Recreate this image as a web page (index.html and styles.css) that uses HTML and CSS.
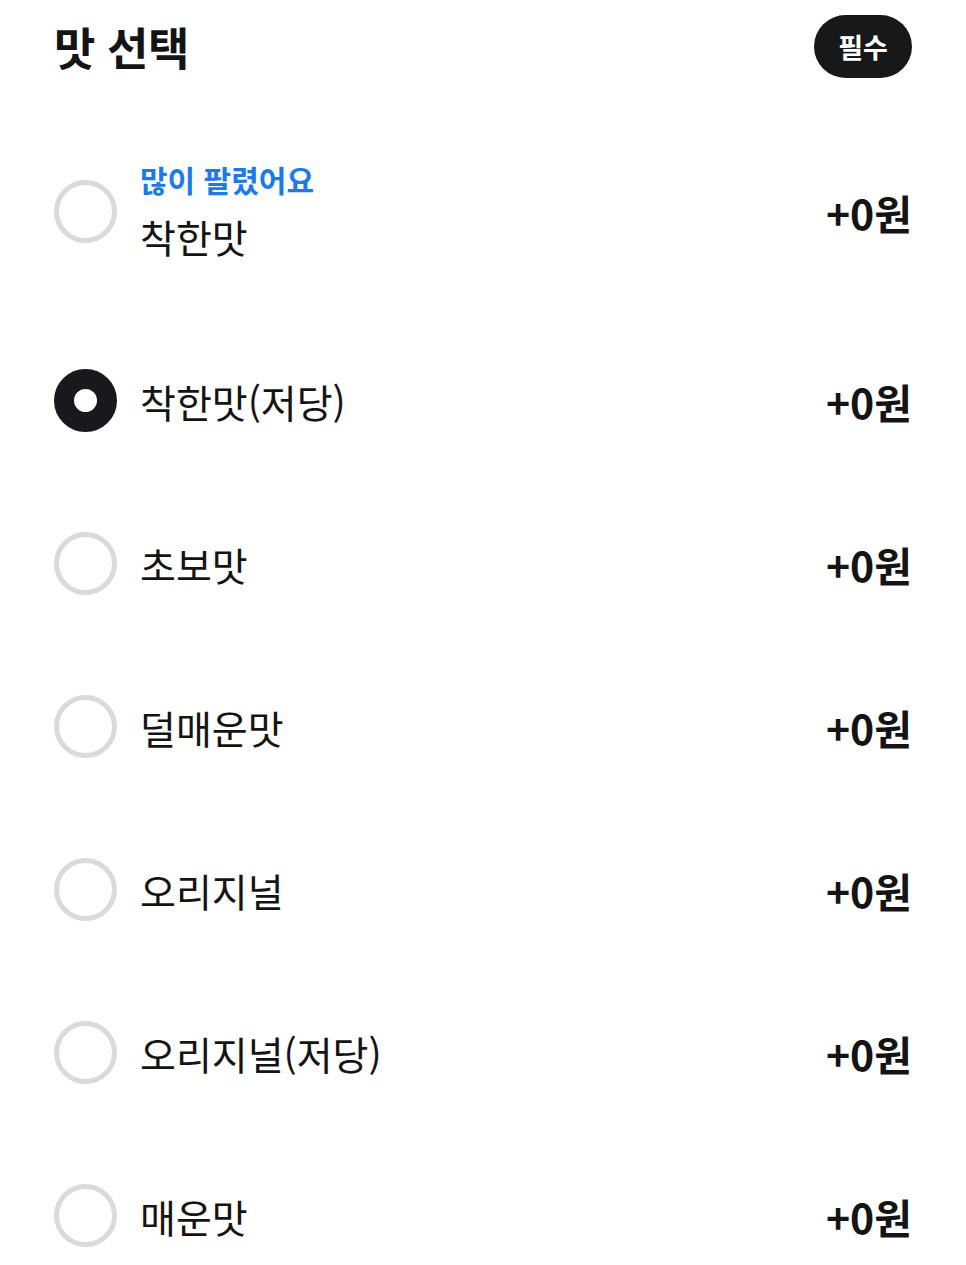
FILE: index.html
```html
<!DOCTYPE html>
<html lang="ko">
<head>
<meta charset="utf-8">
<link rel="stylesheet" href="styles.css">
</head>
<body>
<div class="page">
  <div class="header">
    <h1 class="title">맛 선택</h1>
    <span class="badge">필수</span>
  </div>
  <ul class="options">
    <li class="option option-first">
      <span class="radio"></span>
      <div class="label label-tagged">
        <span class="tag">많이 팔렸어요</span>
        <span class="name">착한맛</span>
      </div>
      <span class="price">+0원</span>
    </li>
    <li class="option">
      <span class="radio radio-on"></span>
      <div class="label"><span class="name">착한맛(저당)</span></div>
      <span class="price">+0원</span>
    </li>
    <li class="option">
      <span class="radio"></span>
      <div class="label"><span class="name">초보맛</span></div>
      <span class="price">+0원</span>
    </li>
    <li class="option">
      <span class="radio"></span>
      <div class="label"><span class="name">덜매운맛</span></div>
      <span class="price">+0원</span>
    </li>
    <li class="option">
      <span class="radio"></span>
      <div class="label"><span class="name">오리지널</span></div>
      <span class="price">+0원</span>
    </li>
    <li class="option">
      <span class="radio"></span>
      <div class="label"><span class="name">오리지널(저당)</span></div>
      <span class="price">+0원</span>
    </li>
    <li class="option">
      <span class="radio"></span>
      <div class="label"><span class="name">매운맛</span></div>
      <span class="price">+0원</span>
    </li>
  </ul>
</div>
</body>
</html>
```

FILE: styles.css
```css
* { box-sizing: border-box; }
html, body {
  margin: 0;
  padding: 0;
  background: #ffffff;
}
body {
  font-family: "Noto Sans CJK KR", "Noto Sans", sans-serif;
  color: #141414;
}
.page {
  padding: 0 54px 0 54px;
}
.header {
  height: 93px;
  display: flex;
  align-items: center;
  justify-content: space-between;
}
.title {
  margin: 0;
  font-size: 45px;
  font-weight: 700;
  letter-spacing: -0.5px;
  color: #141414;
}
.badge {
  display: inline-flex;
  align-items: center;
  justify-content: center;
  width: 98px;
  height: 63px;
  border-radius: 32px;
  background: #17181a;
  color: #ffffff;
  font-size: 27px;
  font-weight: 700;
}
.options {
  list-style: none;
  margin: 11px 0 0;
  padding: 0;
}
.option {
  height: 163px;
  display: flex;
  align-items: center;
}
.option-first {
  height: 215px;
}
.radio {
  flex: 0 0 auto;
  width: 63px;
  height: 63px;
  border-radius: 50%;
  border: 5px solid #dadada;
  background: #fff;
}
.radio-on {
  border: 20px solid #17191c;
}
.label {
  flex: 1 1 auto;
  margin-left: 23px;
  display: flex;
  flex-direction: column;
}
.label-tagged {
  padding-bottom: 4px;
}
.tag {
  font-size: 30px;
  font-weight: 700;
  color: #1b7be8;
  line-height: 40px;
  margin-bottom: 13px;
}
.name {
  font-size: 39px;
  font-weight: 400;
  line-height: 48px;
  color: #141414;
}
.price {
  flex: 0 0 auto;
  font-size: 41px;
  font-weight: 700;
  color: #141414;
}
```
